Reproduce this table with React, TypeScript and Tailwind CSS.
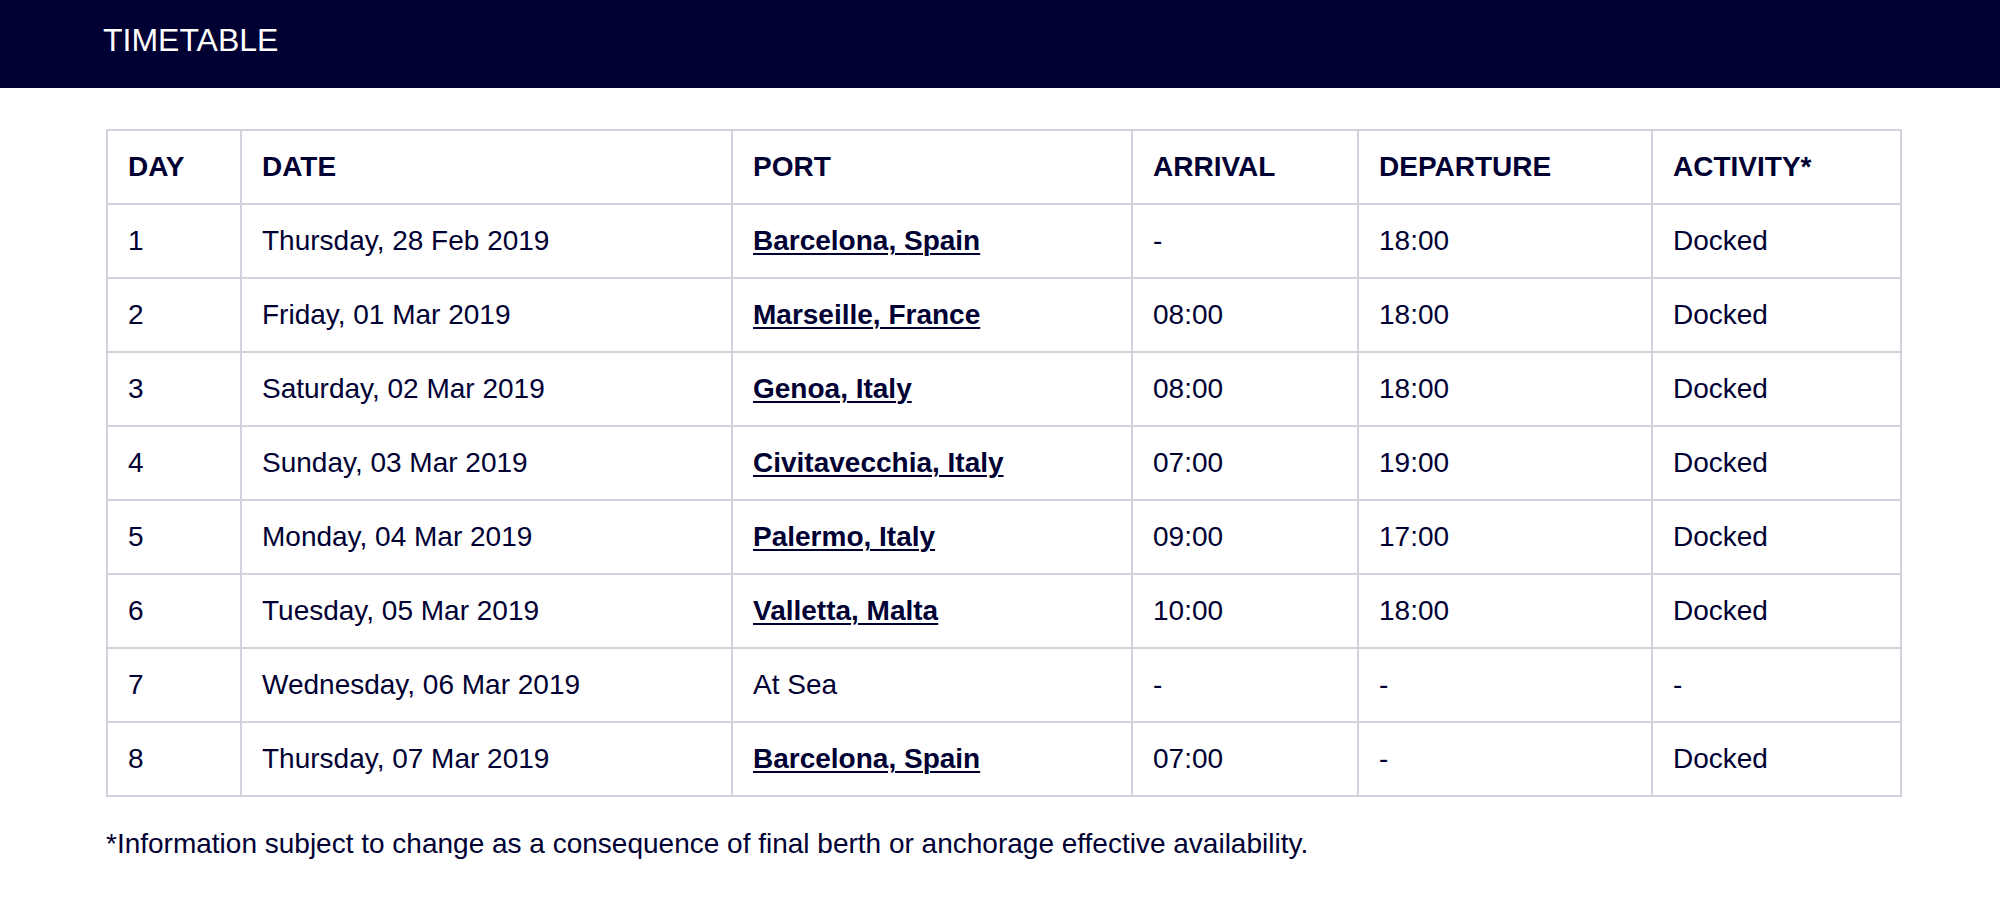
import React from "react";

type Row = {
  day: string;
  date: string;
  port: string;
  link: boolean;
  arrival: string;
  departure: string;
  activity: string;
};

const rows: Row[] = [
  { day: "1", date: "Thursday, 28 Feb 2019", port: "Barcelona, Spain", link: true, arrival: "-", departure: "18:00", activity: "Docked" },
  { day: "2", date: "Friday, 01 Mar 2019", port: "Marseille, France", link: true, arrival: "08:00", departure: "18:00", activity: "Docked" },
  { day: "3", date: "Saturday, 02 Mar 2019", port: "Genoa, Italy", link: true, arrival: "08:00", departure: "18:00", activity: "Docked" },
  { day: "4", date: "Sunday, 03 Mar 2019", port: "Civitavecchia, Italy", link: true, arrival: "07:00", departure: "19:00", activity: "Docked" },
  { day: "5", date: "Monday, 04 Mar 2019", port: "Palermo, Italy", link: true, arrival: "09:00", departure: "17:00", activity: "Docked" },
  { day: "6", date: "Tuesday, 05 Mar 2019", port: "Valletta, Malta", link: true, arrival: "10:00", departure: "18:00", activity: "Docked" },
  { day: "7", date: "Wednesday, 06 Mar 2019", port: "At Sea", link: false, arrival: "-", departure: "-", activity: "-" },
  { day: "8", date: "Thursday, 07 Mar 2019", port: "Barcelona, Spain", link: true, arrival: "07:00", departure: "-", activity: "Docked" },
];

const cell = "h-[74px] border-2 border-[#d2d2dc] pl-[20px] pr-4 align-middle text-left";

export default function App() {
  return (
    <div className="min-h-screen bg-white text-[#000033] font-['Liberation_Sans',Arial,sans-serif]">
      {/* Header bar */}
      <header className="h-[88px] bg-[#000033] pl-[103px] pt-[24px]">
        <h1 className="text-[32px] leading-[32px] text-white">TIMETABLE</h1>
      </header>

      <main className="pl-[106px] pt-[41px]">
        <table className="w-[1794px] table-fixed border-collapse text-[28px]">
          <colgroup>
            <col className="w-[134px]" />
            <col className="w-[491px]" />
            <col className="w-[400px]" />
            <col className="w-[226px]" />
            <col className="w-[294px]" />
            <col className="w-[249px]" />
          </colgroup>
          <thead>
            <tr className="font-bold">
              <th className={cell}>DAY</th>
              <th className={cell}>DATE</th>
              <th className={cell}>PORT</th>
              <th className={cell}>ARRIVAL</th>
              <th className={cell}>DEPARTURE</th>
              <th className={cell}>ACTIVITY*</th>
            </tr>
          </thead>
          <tbody>
            {rows.map((r) => (
              <tr key={r.day}>
                <td className={cell}>{r.day}</td>
                <td className={cell}>{r.date}</td>
                <td className={cell}>
                  {r.link ? (
                    <a href="#" className="font-bold underline decoration-2 underline-offset-[3px]">
                      {r.port}
                    </a>
                  ) : (
                    r.port
                  )}
                </td>
                <td className={cell}>{r.arrival}</td>
                <td className={cell}>{r.departure}</td>
                <td className={cell}>{r.activity}</td>
              </tr>
            ))}
          </tbody>
        </table>

        <p className="mt-[31px] text-[28px] leading-[32px]">
          *Information subject to change as a consequence of final berth or anchorage effective availability.
        </p>
      </main>
    </div>
  );
}
